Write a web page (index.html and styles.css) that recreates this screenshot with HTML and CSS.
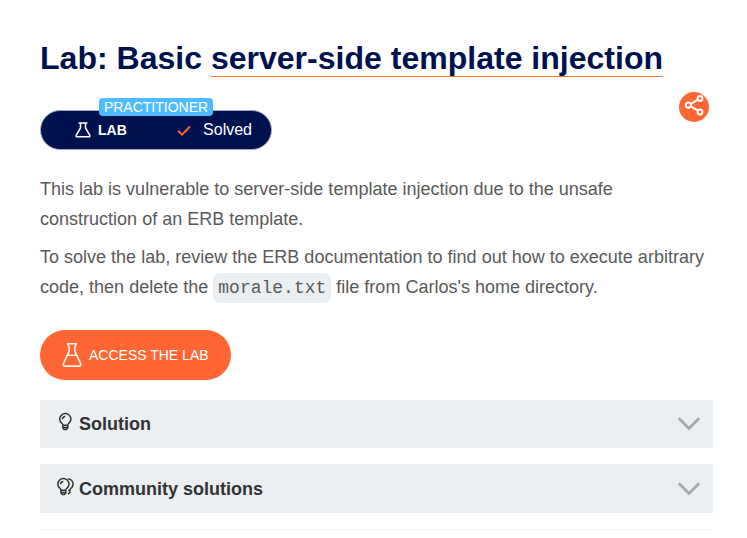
FILE: index.html
```html
<!DOCTYPE html>
<html lang="en">
<head>
<meta charset="utf-8">
<title>Lab: Basic server-side template injection</title>
<link rel="stylesheet" href="styles.css">
</head>
<body>
<main class="page">
  <h1 class="title">Lab: Basic <a class="title-link">server-side template injection</a></h1>
  <div class="status-row">
    <div class="status">
      <span class="level">PRACTITIONER</span>
      <svg class="status-flask" width="16" height="16" viewBox="0 0 16 16"><path d="M3.600 1h8.800M5.500 1v5L1.300 13q-.8 1.800 1 1.800h11.400q1.800 0 1-1.800L10.500 6V1"/></svg>
      <span class="status-lab">LAB</span>
      <svg class="status-check" width="14" height="12" viewBox="0 0 14 12"><path d="M1 5.700l4 4L13 1.500"/></svg>
      <span class="status-solved">Solved</span>
    </div>
    <svg class="share" width="30" height="30" viewBox="0 0 30 30"><circle class="share-disc" cx="15" cy="15" r="15"/><path d="M18.900 7.600L12 11.800M12 14.400l6.900 4.300"/><circle cx="21" cy="6.400" r="2.400"/><circle cx="9.400" cy="13.100" r="2.600"/><circle cx="21" cy="20" r="2.400"/></svg>
  </div>
  <p class="text">This lab is vulnerable to server-side template injection due to the unsafe construction of an ERB template.</p>
  <p class="text">To solve the lab, review the ERB documentation to find out how to execute arbitrary code, then delete the <code class="code">morale.txt</code> file from Carlos's home directory.</p>
  <a class="button">
    <svg width="20" height="26" viewBox="0 0 20 26"><path d="M5.700 1.700h8.600c0 1.500-1.300 1.500-1.300 3V9.500l5.700 12.300q.5 2.200-1.600 2.300H2.900Q.7 24 1.300 21.800L7 9.500V4.700c0-1.500-1.300-1.500-1.300-3zM5.500 13.300h9"/></svg>
    <span>ACCESS THE LAB</span>
  </a>
  <div class="panel">
    <svg class="bulb" width="20" height="20" viewBox="0 0 20 20"><path d="M8 13.200C8 11.600 4.700 10.600 4.700 7.200a5.600 5.600 0 0 1 11.200 0c0 3.400-3.300 4.400-3.300 6zM7.800 13.200v2.500l1.300 1.700h2.400l1.300-1.700v-2.500M7.400 7.300q.2-2.600 2.800-2.800M8 15.500h4.600"/></svg>
    <span class="panel-title">Solution</span>
    <svg class="chevron" width="24" height="16" viewBox="0 0 24 16"><path d="M1.800 2.300L12 12.500 22.200 2.300"/></svg>
  </div>
  <div class="panel panel-last">
    <svg class="bulb" width="20" height="20" viewBox="0 0 20 20"><path d="M6.100 13.200c0-1.600-3.300-2.600-3.300-6a5.600 5.600 0 0 1 11.200 0c0 3.400-3.300 4.400-3.300 6zM5.900 13.200v2.500l1.300 1.700h2.400l1.300-1.700v-2.500M5.500 7.300q.2-2.600 2.800-2.800M6.100 15.500h4.600M12.900 1.800c3.200.3 5.200 2.700 5.200 5.400 0 3.400-3.300 4.400-3.300 6h-1.600M14.800 13.200v2.500l-1.800 1.500"/></svg>
    <span class="panel-title">Community solutions</span>
    <svg class="chevron" width="24" height="16" viewBox="0 0 24 16"><path d="M1.800 2.300L12 12.500 22.200 2.300"/></svg>
  </div>
  <hr class="rule">
</main>
</body>
</html>
```
FILE: styles.css
```css
* { box-sizing: border-box; }
body { margin: 0; background: #fff; font-family: "Liberation Sans", Arial, sans-serif; overflow: hidden; }
svg { display: block; flex: none; fill: none; }
.page { width: 713px; padding: 38px 0 0 40px; }
.title { height: 40px; margin: 0; font-size: 32.04px; line-height: 40px; color: #00114f; white-space: nowrap; }
.title-link { display: inline-block; height: 38px; line-height: 38px; background: linear-gradient(#e8743f, #e8743f) 0 37px / 100% 1px no-repeat; }
.status-row { display: flex; justify-content: space-between; height: 57px; margin-top: 14px; padding-right: 4px; }
.status { position: relative; display: flex; align-items: center; width: 231.500px; height: 40px; margin-top: 18px; padding: 0 0 1px 34px; border: 1px solid #a0a7c3; border-radius: 20px; background: #00114f; color: #fff; }
.level { position: absolute; left: 58px; top: -13px; width: 114px; height: 18px; border-radius: 4px; background: #4fbcff; font-size: 14px; line-height: 18px; text-align: center; }
.status-flask { stroke: #fff; stroke-width: 1.5; }
.status-lab { margin-left: 7px; font-size: 14px; font-weight: bold; }
.status-check { margin: 2px 12px 0 auto; stroke: #ff6633; stroke-width: 2; }
.status-solved { margin-right: 18.500px; font-size: 16px; }
.share { stroke: #fff; stroke-width: 2; }
.share-disc { fill: #ff6633; stroke: none; }
.text { margin: 25px 0 0; font-size: 18.02px; line-height: 30px; color: #5a5a5a; }
.text + .text { margin-top: 8px; }
.code { padding: 5px 5px 5px; border-radius: 6px; background: #ebeff2; font-family: "Liberation Mono", monospace; font-size: 18px; }
.button { display: flex; align-items: center; width: 191px; height: 50px; margin-top: 27px; padding-left: 22px; gap: 7px; border-radius: 25px; background: #ff6633; color: #fff; font-size: 14px; white-space: nowrap; }
.button svg { stroke: #fff0e8; stroke-width: 1.6; }
.panel { display: flex; align-items: center; height: 48px; margin-top: 20px; padding: 0 12px 0 15px; background: #ebeff2; }
.panel-last { height: 49px; margin-top: 16px; padding-top: 1px; }
.bulb { margin-top: -5px; stroke: #333; stroke-width: 1.5; }
.panel-title { margin-left: 4px; color: #333; font-size: 18px; font-weight: bold; }
.chevron { margin-left: auto; stroke: #a7aaac; stroke-width: 3; }
.rule { margin: 16px 1px 0 0; border: 0; border-top: 1px solid #f2f2f2; }
```
